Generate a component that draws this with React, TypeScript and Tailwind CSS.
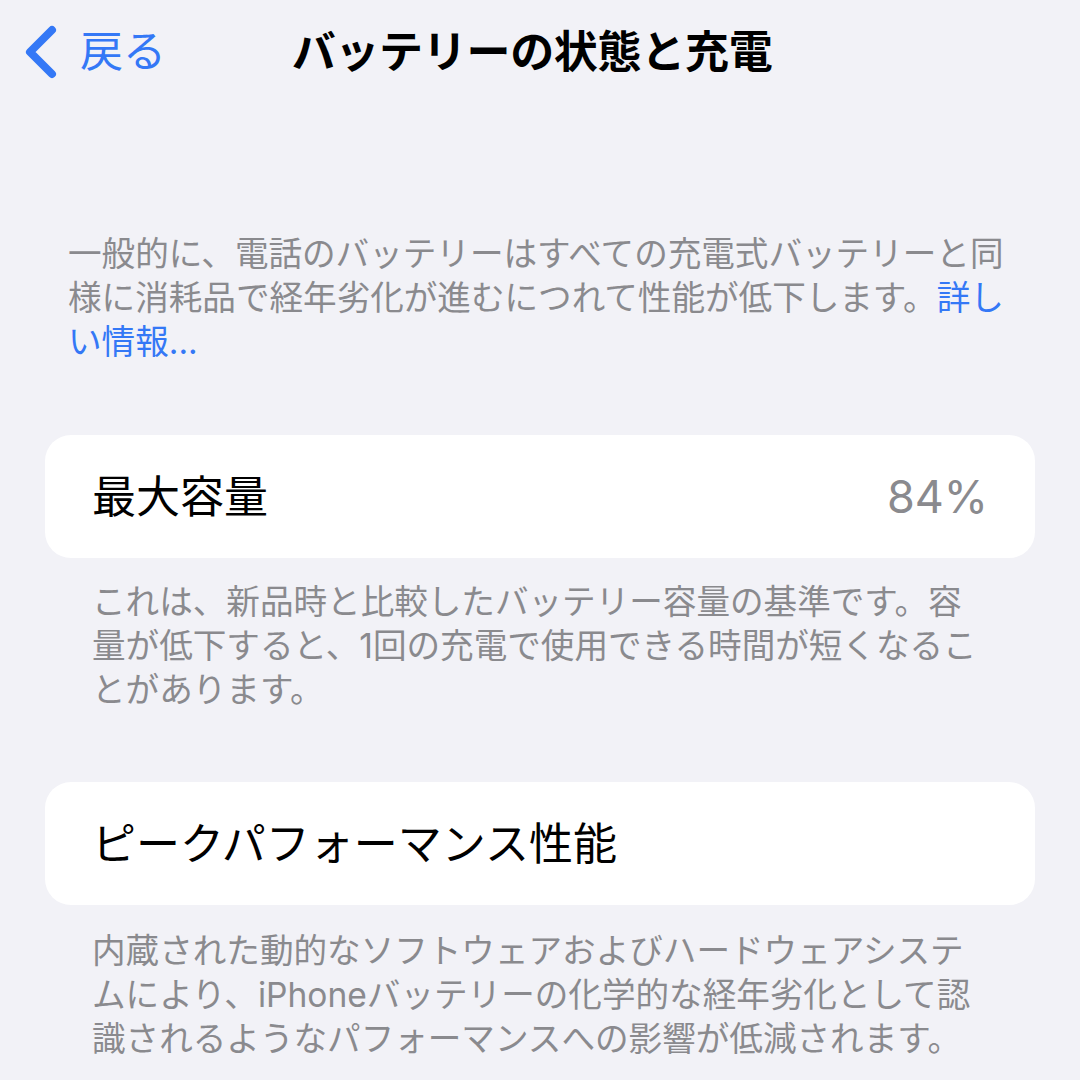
import React from 'react';

const BackChevron = () => (
  <svg width="34" height="56" viewBox="0 0 34 56" fill="none" className="shrink-0">
    <path d="M28 6 L6 28 L28 50" stroke="#3478f6" strokeWidth="8" strokeLinecap="round" strokeLinejoin="round" />
  </svg>
);

const Footnote: React.FC<{ lines: React.ReactNode[]; className?: string }> = ({ lines, className }) => (
  <p className={`text-[33.6px] leading-[44px] text-[#8a8a8e] whitespace-nowrap ${className || ''}`}>
    {lines.map((line, i) => (
      <span key={i} className="block">
        {line}
      </span>
    ))}
  </p>
);

export default function App() {
  return (
    <div className="w-full h-[1080px] overflow-hidden bg-[#f2f2f7] font-['Inter','Noto_Sans_CJK_JP',sans-serif] text-black">
      {/* nav bar */}
      <header className="grid grid-cols-[1fr_auto_1fr] items-center h-[102px]">
        <button className="flex items-center gap-[22px] pl-[24px] pt-[1px] text-[43px] leading-none text-[#3478f6]">
          <BackChevron />
          <span>戻る</span>
        </button>
        <h1 className="mr-[16px] pt-[2px] text-[44px] leading-none font-bold tracking-[-0.3px]">バッテリーの状態と充電</h1>
        <div />
      </header>

      <main className="pt-[130px]">
        <Footnote
          className="px-[68px]"
          lines={[
            '一般的に、電話のバッテリーはすべての充電式バッテリーと同',
            <>
              様に消耗品で経年劣化が進むにつれて性能が低下します。<span className="text-[#3478f6]">詳し</span>
            </>,
            <span className="text-[#3478f6]">い情報...</span>,
          ]}
        />

        <div className="mx-[45px] mt-[71px] h-[123px] rounded-[26px] bg-white px-[47px] flex items-center justify-between">
          <span className="text-[44px] leading-none">最大容量</span>
          <span className="text-[45px] leading-none text-[#8a8a8e]">84%</span>
        </div>
        <Footnote
          className="px-[92px] mt-[22px]"
          lines={[
            'これは、新品時と比較したバッテリー容量の基準です。容',
            '量が低下すると、1回の充電で使用できる時間が短くなるこ',
            'とがあります。',
          ]}
        />

        <div className="mx-[45px] mt-[70px] h-[123px] rounded-[26px] bg-white px-[47px] flex items-center">
          <span className="text-[44px] leading-none">ピークパフォーマンス性能</span>
        </div>
        <Footnote
          className="px-[92px] mt-[24px]"
          lines={[
            '内蔵された動的なソフトウェアおよびハードウェアシステ',
            'ムにより、iPhoneバッテリーの化学的な経年劣化として認',
            '識されるようなパフォーマンスへの影響が低減されます。',
          ]}
        />
      </main>
    </div>
  );
}
